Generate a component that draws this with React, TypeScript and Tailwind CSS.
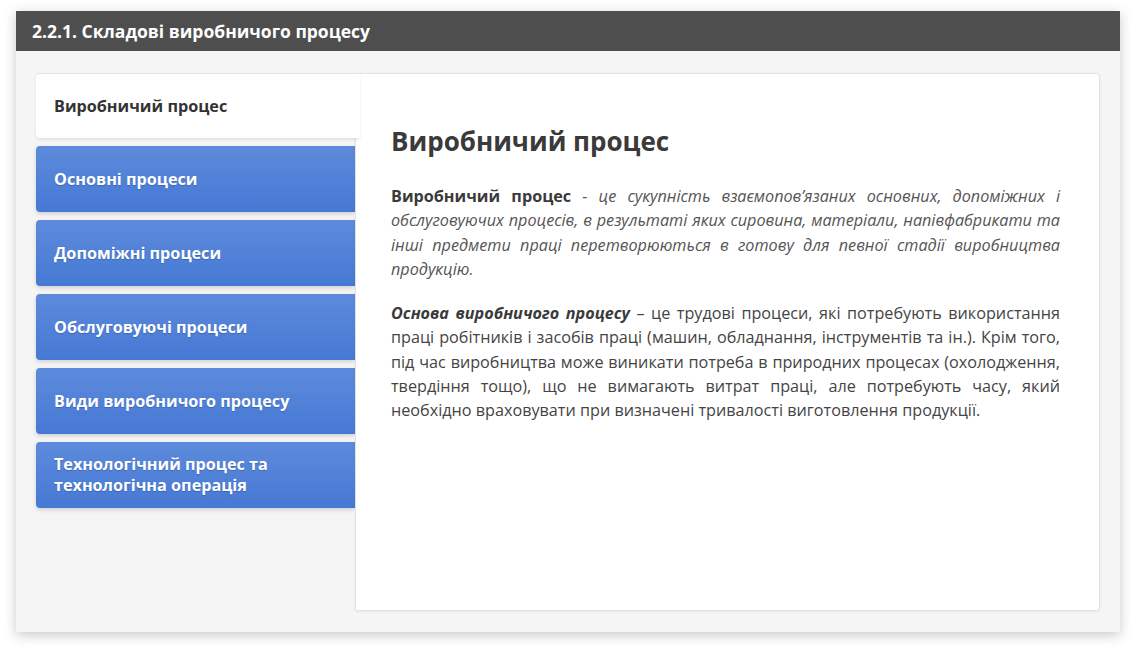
import React from "react";

const tabs = [
  "Основні процеси",
  "Допоміжні процеси",
  "Обслуговуючі процеси",
  "Види виробничого процесу",
  "Технологічний процес та технологічна операція",
];

export default function App() {
  return (
    <div
      className="w-[1136px] h-[653px] bg-white pt-[11px] pl-[16px]"
      style={{ fontFamily: '"Open Sans", "Noto Sans", sans-serif' }}
    >
      <div className="w-[1104px] h-[621px] flex flex-col bg-[#f5f5f5] shadow-[0_3px_12px_rgba(0,0,0,0.22)]">
        <div className="h-[40px] bg-[#4e4e4e] flex items-center pl-[16px]">
          <span className="text-white text-[17.5px] font-bold">2.2.1. Складові виробничого процесу</span>
        </div>
        <div className="flex-1 flex pt-[22px] pl-[20px] pr-[20px] pb-[21px]">
          <div className="w-[319px] flex flex-col shrink-0">
            <div className="relative z-10 w-[324px] h-[65px] bg-white rounded-l-[4px] border-t border-[#e2e2e2] flex items-center pl-[18px] shadow-[0_2px_3px_rgba(0,0,0,0.08)]">
              <span className="text-[#333] text-[16.2px] font-bold">Виробничий процес</span>
            </div>
            <div className="flex flex-col gap-2 mt-2">
              {tabs.map((t) => (
                <div
                  key={t}
                  className="h-[66px] rounded-l-[4px] bg-gradient-to-b from-[#5d8adb] to-[#4679d5] flex items-center pl-[18px] pr-6 shadow-[0_2px_4px_rgba(0,0,0,0.15)]"
                >
                  <span className="text-white text-[16.2px] font-bold leading-[21px] [text-shadow:0_1px_1px_rgba(0,0,0,0.2)]">
                    {t}
                  </span>
                </div>
              ))}
            </div>
          </div>
          <div className="flex-1 bg-white border border-[#e2e2e2] rounded-r-[4px] rounded-bl-[2px] shadow-[0_1px_3px_rgba(0,0,0,0.06)] pt-[52px] pl-[35px] pr-[39px]">
            <h2 className="text-[26px] font-bold text-[#3a3a3a] leading-[31px]">Виробничий процес</h2>
            <p className="mt-[27px] text-[16.2px] leading-[24.3px] text-[#444] text-justify">
              <b className="text-[#3a3a3a]">Виробничий процес</b>{" "}
              <i className="text-[#555]">
                - це сукупність взаємопов’язаних основних, допоміжних і обслуговуючих процесів, в результаті яких сировина, матеріали, напівфабрикати та інші предмети праці перетворюються в готову для певної стадії виробництва продукцію.
              </i>
            </p>
            <p className="mt-[20px] text-[16.2px] leading-[24.3px] text-[#444] text-justify">
              <b>
                <i className="text-[#3a3a3a]">Основа виробничого процесу</i>
              </b>{" "}
              – це трудові процеси, які потребують використання праці робітників і засобів праці (машин, обладнання, інструментів та ін.). Крім того, під час виробництва може виникати потреба в природних процесах (охолодження, твердіння тощо), що не вимагають витрат праці, але потребують часу, який необхідно враховувати при визначені тривалості виготовлення продукції.
            </p>
          </div>
        </div>
      </div>
    </div>
  );
}
